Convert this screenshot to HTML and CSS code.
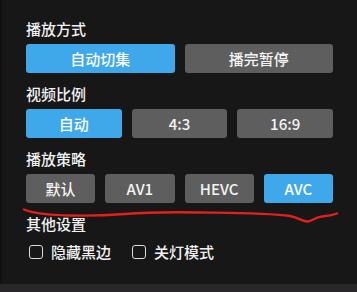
FILE: index.html
```html
<!DOCTYPE html>
<html lang="zh-CN">
<head>
<meta charset="utf-8">
<title>播放设置</title>
<link rel="stylesheet" href="styles.css">
</head>
<body>
<div class="panel">
  <section class="group">
    <div class="label">播放方式</div>
    <div class="btns cols-2">
      <button class="btn active">自动切集</button>
      <button class="btn">播完暂停</button>
    </div>
  </section>
  <section class="group">
    <div class="label">视频比例</div>
    <div class="btns cols-3">
      <button class="btn active">自动</button>
      <button class="btn">4:3</button>
      <button class="btn">16:9</button>
    </div>
  </section>
  <section class="group">
    <div class="label">播放策略</div>
    <div class="btns cols-4">
      <button class="btn">默认</button>
      <button class="btn">AV1</button>
      <button class="btn">HEVC</button>
      <button class="btn active">AVC</button>
    </div>
  </section>
  <section class="group">
    <div class="label">其他设置</div>
    <div class="checks">
      <label class="check"><span class="box"></span>隐藏黑边</label>
      <label class="check"><span class="box"></span>关灯模式</label>
    </div>
  </section>
</div>
<svg class="mark" width="357" height="292" viewBox="0 0 357 292">
  <path d="M24 209.5 C 30 212, 45 215, 70 215.5 C 90 216, 105 215.5, 125 214 C 150 212, 175 212, 200 212.5 C 240 213, 270 213, 290 216 C 300 218, 303 222, 308 221.5 C 313 221, 315 217, 322 216.5 C 328 216, 333 215, 337 213.5" fill="none" stroke="#e3201b" stroke-width="2.4" stroke-linecap="round"/>
</svg>
</body>
</html>
```

FILE: styles.css
```css
html, body {
  margin: 0;
  padding: 0;
}
body {
  background: #2a272a;
  width: 357px;
  height: 292px;
  overflow: hidden;
  position: relative;
  font-family: "Noto Sans CJK SC", "Noto Sans", sans-serif;
}
.panel {
  box-sizing: border-box;
  height: 284px;
  background: #171717;
  border-left: 2px solid #111111;
  padding: 19px 0 0 24px;
  display: flex;
  flex-direction: column;
  gap: 11px;
}
.group {
  display: flex;
  flex-direction: column;
}
.label {
  color: #f2f2f2;
  font-size: 15px;
  line-height: 20px;
  font-weight: 500;
  margin-bottom: 5px;
}
.btns {
  display: grid;
  width: 307px;
  gap: 10px;
}
.cols-2 { grid-template-columns: repeat(2, 1fr); }
.cols-3 { grid-template-columns: repeat(3, 1fr); }
.cols-4 { grid-template-columns: repeat(4, 1fr); }
.btn {
  height: 29px;
  border: none;
  border-radius: 3px;
  background: #5e5e5e;
  color: #f4f4f4;
  font-family: "Noto Sans CJK SC", "Noto Sans", sans-serif;
  font-size: 15px;
  font-weight: 500;
  padding: 0;
  line-height: 29px;
}
.btn.active {
  background: #3ea8ea;
  color: #ffffff;
}
.checks {
  display: flex;
  gap: 21px;
  margin-top: 3px;
  padding-left: 3px;
}
.check {
  display: flex;
  align-items: center;
  gap: 8px;
  color: #f2f2f2;
  font-size: 15px;
  line-height: 20px;
  font-weight: 500;
}
.box {
  box-sizing: border-box;
  width: 14px;
  height: 14px;
  border: 1.5px solid #dcdcdc;
  border-radius: 3px;
}
.mark {
  position: absolute;
  left: 0;
  top: 0;
  pointer-events: none;
}
```
